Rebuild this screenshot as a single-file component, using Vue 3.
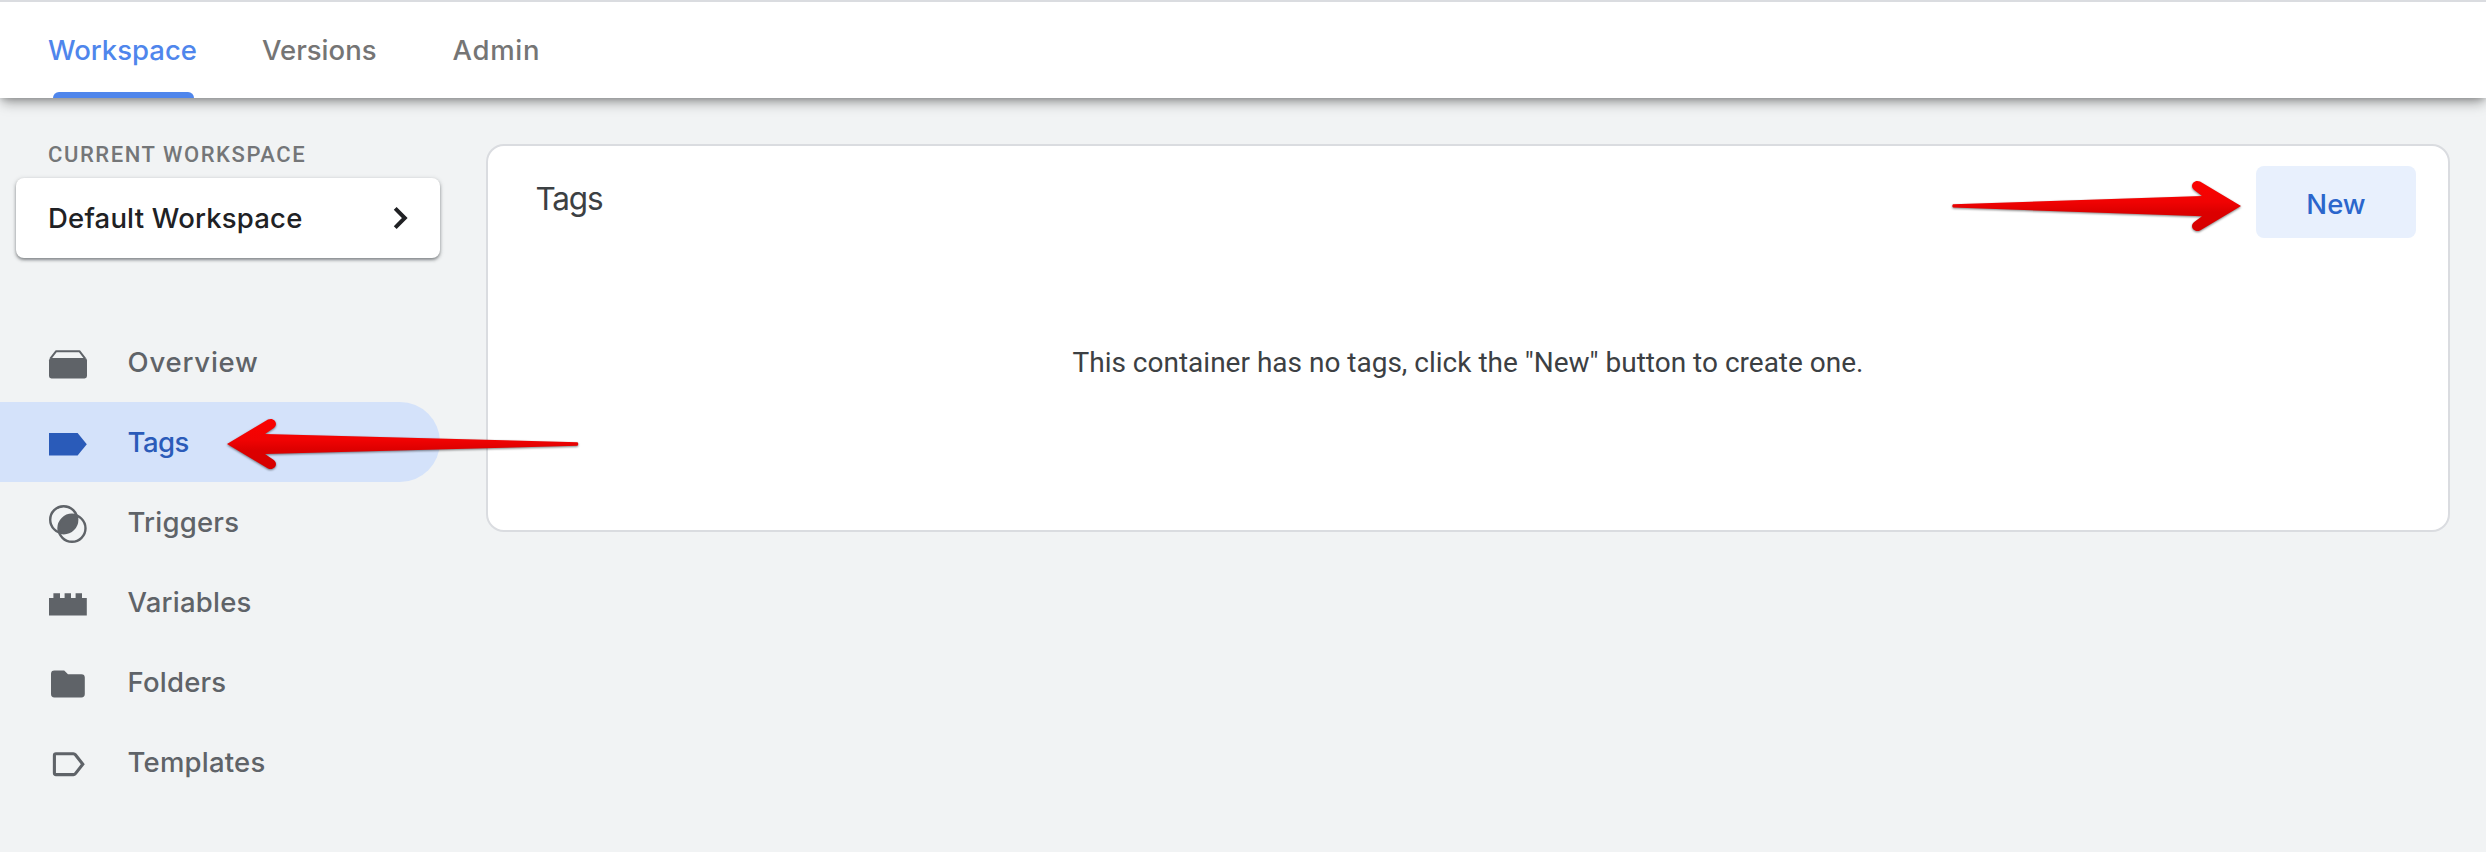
<script setup>
const tabs = [
  { id: 'workspace', label: 'Workspace', active: true },
  { id: 'versions', label: 'Versions' },
  { id: 'admin', label: 'Admin' },
]
const items = [
  { id: 'overview', label: 'Overview' },
  { id: 'tags', label: 'Tags', active: true },
  { id: 'triggers', label: 'Triggers' },
  { id: 'variables', label: 'Variables' },
  { id: 'folders', label: 'Folders' },
  { id: 'templates', label: 'Templates' },
]
</script>

<template>
  <div class="page">
    <header class="topbar">
      <a v-for="t in tabs" :key="t.id" class="tab" :class="[t.id, { active: t.active }]"><span>{{ t.label }}</span></a>
    </header>
    <div class="body">
      <aside class="side">
        <div class="caption"><span>CURRENT WORKSPACE</span></div>
        <div class="switcher">
          <span class="switcher-name">Default Workspace</span>
          <svg class="chevron" width="18" height="26" viewBox="0 0 18 26"><path d="M3.2 3.4 12.8 13 3.2 22.6" fill="none" stroke="#202124" stroke-width="4" /></svg>
        </div>
        <nav class="nav">
          <a v-for="i in items" :key="i.id" class="item" :class="[i.id, { active: i.active }]">
            <svg class="icon" width="40" height="40" viewBox="0 0 40 40">
              <template v-if="i.id === 'overview'">
                <path d="M2.400 14.600 8.200 7.200H31.400L37.200 14.600" fill="none" stroke="currentColor" stroke-width="2" stroke-linejoin="round" />
                <rect x="1" y="14" width="38" height="20.4" rx="2.4" fill="currentColor" />
              </template>
              <path v-else-if="i.id === 'tags'" d="M1 9H29.6L38.8 20.3 29.6 31.6H1Z" fill="currentColor" />
              <template v-else-if="i.id === 'triggers'">
                <path d="M28.600 11.500A13.600 13.600 0 0 0 11.100 28.500A13.600 13.600 0 0 0 28.600 11.500Z" fill="currentColor" />
                <circle cx="15.700" cy="15.700" r="13.500" fill="none" stroke="currentColor" stroke-width="2.400" />
                <circle cx="24" cy="24.300" r="13.500" fill="none" stroke="currentColor" stroke-width="2.400" />
              </template>
              <path v-else-if="i.id === 'variables'" d="M1 14H5.4V9.2H12V14H16.6V9.2H23V14H27.6V9.2H34V14H38.8V31.6H1Z" fill="currentColor" />
              <path v-else-if="i.id === 'folders'" d="M6.4 6.6H16.2L20 10.2H33.4Q36.8 10.2 36.8 13.6V30Q36.8 33.4 33.4 33.4H6.4Q3 33.4 3 30V10Q3 6.6 6.4 6.6Z" fill="currentColor" />
              <path v-else d="M8 9.800H25.400Q26.600 9.800 27.400 10.800L34.800 20.200 27.400 29.600Q26.600 30.600 25.400 30.600H8Q6.400 30.600 6.400 29V11.400Q6.400 9.800 8 9.800Z" fill="none" stroke="currentColor" stroke-width="3.100" />
            </svg>
            <span class="item-label">{{ i.label }}</span>
          </a>
        </nav>
      </aside>
      <main class="panel">
        <div class="panel-head">
          <h1 class="title"><span>Tags</span></h1>
          <button class="new"><span>New</span></button>
        </div>
        <p class="empty"><span>This container has no tags, click the "New" button to create one.</span></p>
      </main>
    </div>

    <svg class="arrow arrow-new" width="294" height="60" viewBox="0 0 294 60">
      <defs>
        <linearGradient id="red" gradientUnits="userSpaceOnUse" x1="0" y1="5" x2="0" y2="55">
          <stop offset="0" stop-color="#fb0200" />
          <stop offset=".42" stop-color="#f00303" />
          <stop offset=".62" stop-color="#dc0000" />
          <stop offset="1" stop-color="#d60000" />
        </linearGradient>
      </defs>
      <path d="M4 28.300 253 20 245.200 14C240 10 245 2.800 251 5.600L292 30 251 54.400C245 57.200 240 50 245.200 46L253 40.200 4 31.600Q2.600 30 4 28.300Z" fill="url(#red)" />
    </svg>
    <svg class="arrow arrow-tags" width="356" height="60" viewBox="0 0 356 60">
      <path d="M352.500 28.300 40 20 48.800 14C54 10 49 2.800 43 5.600L2 30 43 54.400C49 57.200 54 50 48.800 46L40 40 352.500 31.700Q354 30 352.500 28.300Z" fill="url(#red)" />
    </svg>
  </div>
</template>

<style>
body { margin: 0; background: #f1f3f4; }
</style>

<style scoped>
.page { position: relative; width: 2486px; height: 852px; overflow: hidden; background: #f1f3f4; font-family: Inter, Roboto, sans-serif; }
.page * { box-sizing: border-box; }
.topbar { position: relative; display: flex; height: 98px; padding-left: 48px; border-top: 2px solid #dadce0; background: #fff; box-shadow: 0 6px 12px -2px rgba(0, 0, 0, .38), 0 2px 6px -1px rgba(0, 0, 0, .16); }
.tab { position: relative; display: flex; align-items: center; height: 96px; color: #757575; font-size: 27.500px; font-weight: 500; line-height: 96px; white-space: nowrap; }
.tab.workspace { width: 214px; color: #4f86ec; }
.tab.versions { width: 190.500px; }
.tab.admin { letter-spacing: .7px; }
.tab.active::after { content: ''; position: absolute; left: 4.500px; bottom: 0; width: 141px; height: 6px; border-radius: 6px 6px 0 0; background: #4f86ec; }
.body { display: flex; align-items: flex-start; }
.side { width: 486px; padding-top: 41px; }
.caption { height: 32px; padding-left: 48px; margin-bottom: 7px; color: #747678; font: 500 22px/32px Roboto, sans-serif; letter-spacing: 1.560px; white-space: nowrap; }
.switcher { display: flex; align-items: center; justify-content: space-between; width: 424px; height: 80px; margin-left: 16px; padding: 0 30px 0 32px; border-radius: 8px; background: #fff; box-shadow: 0 2px 3px rgba(60, 64, 67, .5), 0 1px 5px rgba(60, 64, 67, .22); color: #202124; font-size: 27.500px; font-weight: 500; letter-spacing: .2px; white-space: nowrap; }
.nav { margin-top: 64px; }
.item { display: flex; align-items: center; width: 440px; height: 80px; padding-left: 48px; border-radius: 0 40px 40px 0; color: #5f6368; font-size: 27.500px; font-weight: 500; letter-spacing: .22px; white-space: nowrap; }
.item.active { background: #d4e2fa; color: #2a5bb9; letter-spacing: -.5px; }
.item.overview { letter-spacing: .8px; }
.icon { margin: 4px 39.500px 0 0; }
.panel { width: 1964px; height: 388px; margin-top: 46px; border: 2px solid #dadce0; border-radius: 18px; background: #fff; color: #3c4043; }
.panel-head { display: flex; align-items: flex-start; justify-content: space-between; height: 92px; padding: 20px 32px 0 47.500px; }
.title { margin: 11px 0 0; font-size: 31.500px; font-weight: 400; line-height: 44px; letter-spacing: -1.200px; }
.new { width: 160px; height: 72px; padding: 4px 0 0; border: 0; border-radius: 8px; background: #e8f0fd; color: #2b66cc; font: 500 27.500px/48px Inter, Roboto, sans-serif; }
.empty { margin: 105px 0 0; text-align: center; font: 400 28px/40px Roboto, sans-serif; }
.arrow { position: absolute; filter: drop-shadow(0 1px 1px rgba(0, 0, 0, .5)); }
.arrow-new { left: 1949px; top: 176px; }
.arrow-tags { left: 225px; top: 414px; }
</style>
